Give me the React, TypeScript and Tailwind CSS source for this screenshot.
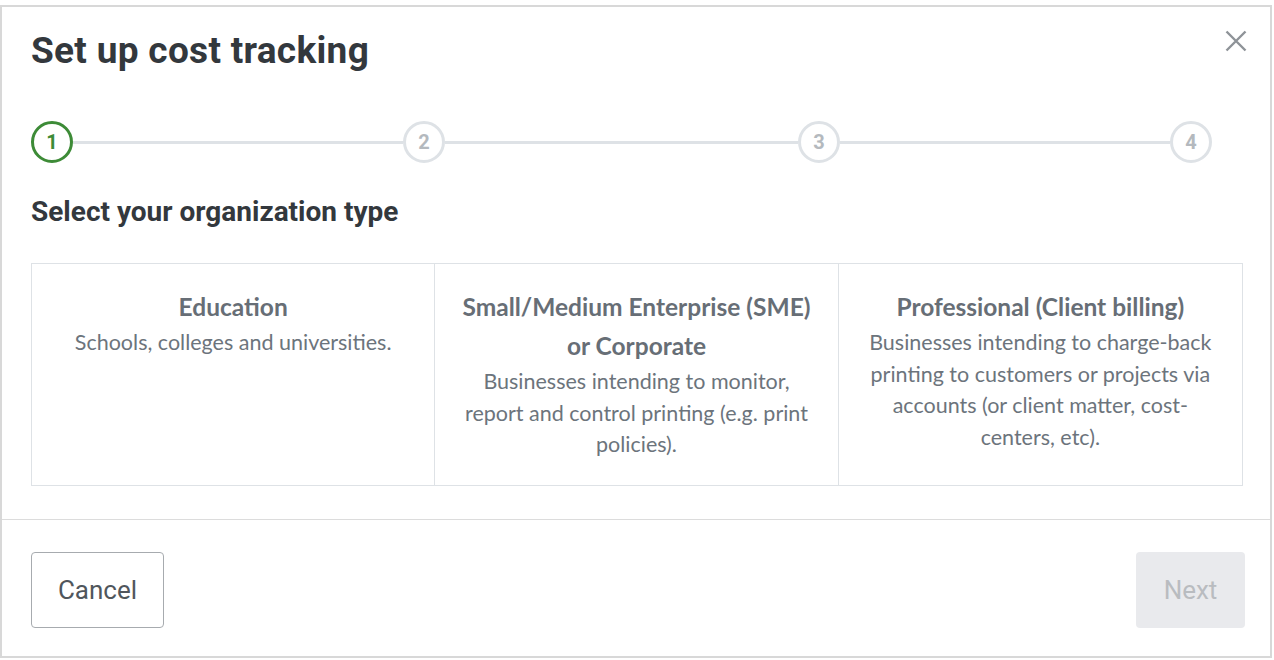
import React from "react";

function Step({ n, active }: { n: number; active?: boolean }) {
  return (
    <div
      className={
        "flex h-[42px] w-[42px] shrink-0 items-center justify-center rounded-full border-[3px] text-[20px] font-bold leading-none " +
        (active ? "border-[#3d8b37] text-[#3d8b37]" : "border-[#dee2e6] text-[#b4b9be]")
      }
      style={{ fontFamily: "Roboto, 'Liberation Sans', sans-serif" }}
    >
      {n}
    </div>
  );
}

function Card({ title, desc, last }: { title: string[]; desc: string; last?: boolean }) {
  return (
    <div
      className={
        "flex flex-col items-center px-[26px] pt-[23px] text-center " +
        (last ? "" : "border-r border-[#dee2e6]")
      }
      style={{ fontFamily: "Lato, 'Noto Sans', sans-serif" }}
    >
      <div className="text-[24.5px] font-bold leading-[39px] text-[#676e76]">
        {title.map((t) => (
          <div key={t}>{t}</div>
        ))}
      </div>
      <div className="mt-[1px] text-[21.5px] leading-[31.5px] text-[#6c747c]">{desc}</div>
    </div>
  );
}

export default function App() {
  return (
    <div className="h-[660px] w-[1274px] bg-white pt-[5px]">
      <div
        className="w-[1272px] border-2 border-[#d8d8d8] bg-white"
        style={{ fontFamily: "Roboto, 'Liberation Sans', sans-serif" }}
      >
        <div className="pl-[29px] pr-[27px] pb-[33px]">
          <div className="flex items-start justify-between pt-[26px]">
            <h1 className="text-[37px] font-bold leading-[36px] tracking-[0.3px] text-[#33383d]">Set up cost tracking</h1>
            <button className="mr-[-4px] mt-[-3px] text-[#8e9398]" aria-label="Close">
              <svg width="22" height="22" viewBox="0 0 22 22" fill="none" stroke="currentColor" strokeWidth="2.4">
                <path d="M1.5 1.5 L20.5 20.5 M20.5 1.5 L1.5 20.5" />
              </svg>
            </button>
          </div>

          <div className="mt-[52px] flex items-center pr-[31px]">
            <Step n={1} active />
            <div className="h-[3px] w-[330px] bg-[#dee2e6]" />
            <Step n={2} />
            <div className="h-[3px] flex-1 bg-[#dee2e6]" />
            <Step n={3} />
            <div className="h-[3px] w-[330px] bg-[#dee2e6]" />
            <Step n={4} />
          </div>

          <h2 className="mt-[35px] text-[28px] font-bold leading-[28px] text-[#33383d]">
            Select your organization type
          </h2>

          <div className="mt-[37px] grid h-[223px] grid-cols-3 border border-[#dee2e6]">
            <Card title={["Education"]} desc="Schools, colleges and universities." />
            <Card
              title={["Small/Medium Enterprise (SME)", "or Corporate"]}
              desc="Businesses intending to monitor, report and control printing (e.g. print policies)."
            />
            <Card
              title={["Professional (Client billing)"]}
              desc="Businesses intending to charge-back printing to customers or projects via accounts (or client matter, cost-centers, etc)."
              last
            />
          </div>
        </div>

        <div className="flex items-center justify-between border-t border-[#dcdcdc] pl-[29px] pr-[25px] pt-[32px] pb-[28px]">
          <button className="h-[76px] w-[133px] rounded-[4px] border border-[#a7abaf] text-[26px] text-[#50565c]">
            Cancel
          </button>
          <button className="h-[76px] w-[109px] rounded-[4px] bg-[#e9eaed] text-[26px] text-[#b9bcc0]">
            Next
          </button>
        </div>
      </div>
    </div>
  );
}
